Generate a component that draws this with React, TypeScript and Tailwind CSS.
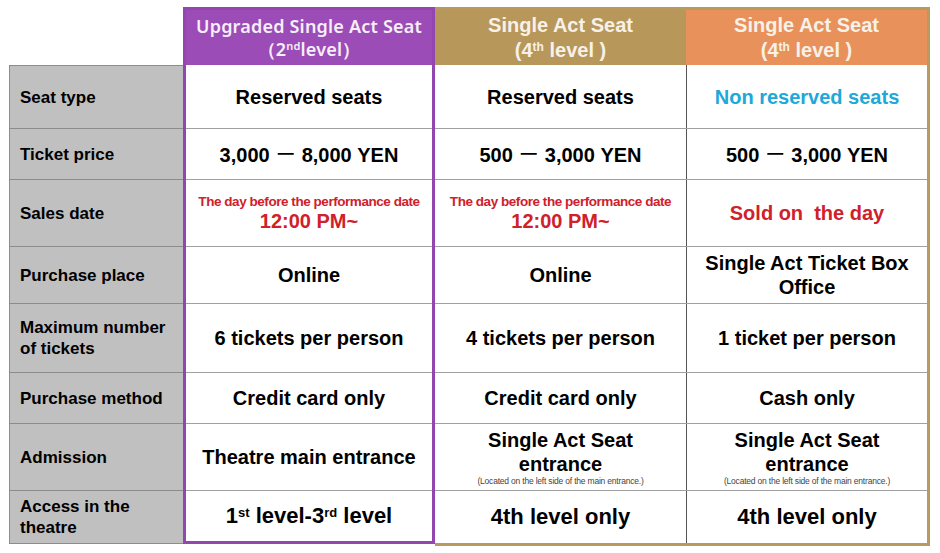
import type { ReactNode } from "react";

const heights = ["h-[63px]", "h-[51px]", "h-[67px]", "h-[57px]", "h-[69px]", "h-[51px]", "h-[67px]", "flex-1"];

const labels: ReactNode[] = [
  "Seat type",
  "Ticket price",
  "Sales date",
  "Purchase place",
  <>Maximum number<br />of tickets</>,
  "Purchase method",
  "Admission",
  <>Access in the<br />theatre</>,
];

const dash = <span className="font-['Noto_Sans_CJK_JP'] font-normal mx-[6px]">ー</span>;

function SalesDate() {
  return (
    <div className="flex flex-col items-center text-[#d0202a]">
      <span className="text-[13.5px] tracking-[-0.45px] leading-[16px]">The day before the performance date</span>
      <span className="text-[20px] leading-[23px]">12:00 PM~</span>
    </div>
  );
}

function SideEntrance() {
  return (
    <div className="flex flex-col items-center">
      <span className="leading-[24px]">Single Act Seat</span>
      <span className="leading-[24px]">entrance</span>
      <span className="text-[8.5px] font-normal tracking-[-0.2px] text-[#444] leading-[11px]">
        (Located on the left side of the main entrance.)
      </span>
    </div>
  );
}

const last = "text-[22px]";

const purple: ReactNode[] = [
  "Reserved seats",
  <>3,000{dash}8,000 YEN</>,
  <SalesDate />,
  "Online",
  "6 tickets per person",
  "Credit card only",
  "Theatre main entrance",
  <span className={last}>1<sup className="text-[13px]">st</sup> level-3<sup className="text-[13px]">rd</sup> level</span>,
];

const gold: ReactNode[] = [
  "Reserved seats",
  <>500{dash}3,000 YEN</>,
  <SalesDate />,
  "Online",
  "4 tickets per person",
  "Credit card only",
  <SideEntrance />,
  <span className={last}>4th level only</span>,
];

const orange: ReactNode[] = [
  <span className="text-[#20a8d8]">Non reserved seats</span>,
  <>500{dash}3,000 YEN</>,
  <span className="text-[#d0202a] text-[20px]">Sold on&nbsp; the day</span>,
  <span className="leading-[24px]">Single Act Ticket Box<br />Office</span>,
  "1 ticket per person",
  "Cash only",
  <SideEntrance />,
  <span className={last}>4th level only</span>,
];

const cell = "flex items-center justify-center text-center text-[20px] font-bold text-black leading-[24px]";

export default function App() {
  return (
    <div className="w-[940px] h-[553px] bg-white pt-[7px] pl-[9px] flex font-['Liberation_Sans',Arial,sans-serif]">
      {/* labels */}
      <div className="w-[174px] flex flex-col h-[537px]">
        <div className="h-[58px] shrink-0" />
        <div className="flex-1 flex flex-col bg-[#c0c0c0] border-l border-b border-[#8c8c8c]">
          {labels.map((l, i) => (
            <div
              key={i}
              className={`${heights[i]} border-t border-[#8c8c8c] flex items-center px-[10px] text-[17px] font-bold text-black leading-[21px]`}
            >
              <div>{l}</div>
            </div>
          ))}
        </div>
      </div>

      {/* upgraded column */}
      <div className="w-[252px] h-[537px] border-[3px] border-[#9446b0] flex flex-col bg-white">
        <div className="h-[55px] shrink-0 bg-[#9b4cb6] flex flex-col items-center justify-center text-[#f6eefa] font-['Noto_Sans',sans-serif] font-semibold text-[18px] leading-[23px] tracking-[0.2px]">
          <span>Upgraded Single Act Seat</span>
          <span>
            （2<sup className="text-[11px] top-[-6px]">nd</sup>level）
          </span>
        </div>
        {purple.map((c, i) => (
          <div key={i} className={`${heights[i]} ${i ? "border-t" : ""} border-[#a0a0a0] ${cell}`}>
            <div>{c}</div>
          </div>
        ))}
      </div>

      {/* right group */}
      <div className="w-[495px] h-[539px] border-t-[3px] border-r-[3px] border-b-[3px] border-[#b89a5e] flex flex-col bg-white">
        <div className="h-[55px] shrink-0 flex text-[#f7f1e8] font-bold text-[20px] leading-[25px]">
          <div className="w-[251px] bg-[#b8975a] flex flex-col items-center justify-center">
            <span>Single Act Seat</span>
            <span>
              (4<sup className="text-[12px]">th</sup> level )
            </span>
          </div>
          <div className="flex-1 bg-[#e8915a] flex flex-col items-center justify-center">
            <span>Single Act Seat</span>
            <span>
              (4<sup className="text-[12px]">th</sup> level )
            </span>
          </div>
        </div>
        {gold.map((c, i) => (
          <div key={i} className={`${heights[i]} ${i ? "border-t" : ""} border-[#a0a0a0] flex`}>
            <div className={`w-[251px] ${cell}`}>
              <div>{c}</div>
            </div>
            <div className={`flex-1 border-l border-[#555] ${cell}`}>
              <div>{orange[i]}</div>
            </div>
          </div>
        ))}
      </div>
    </div>
  );
}
